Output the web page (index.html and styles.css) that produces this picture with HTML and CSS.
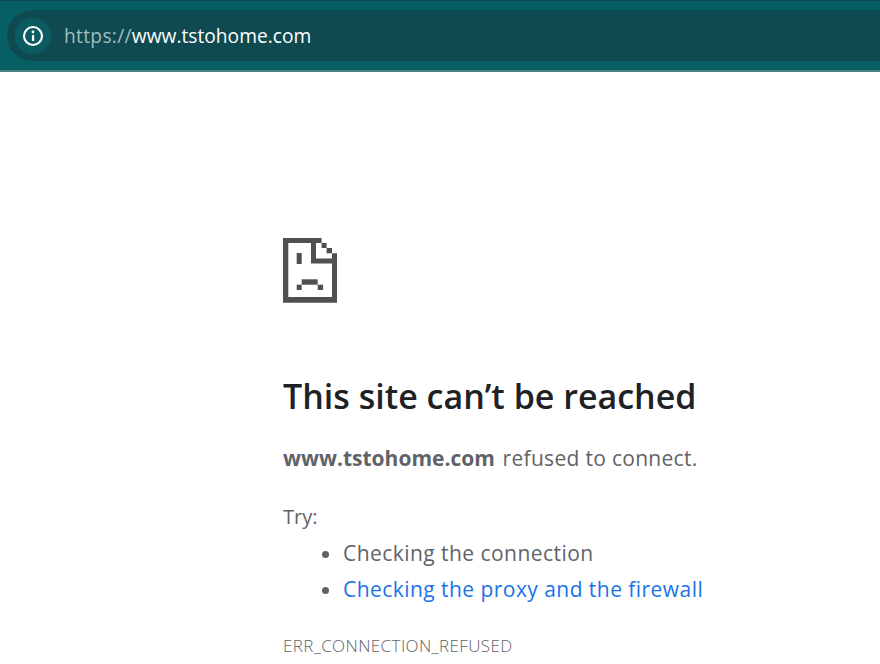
FILE: index.html
```html
<!DOCTYPE html>
<html lang="en">

<head>
    <meta charset="UTF-8">
    <title>www.tstohome.com</title>
    <link rel="stylesheet" href="styles.css">
</head>

<body>

    <div class="toolbar">
        <div class="address-bar">
            <div class="site-info">
                <svg width="22" height="22" viewBox="0 0 22 22">
                    <circle cx="11" cy="11" r="9" fill="none" stroke="#fff" stroke-width="2.1" />
                    <rect x="9.9" y="10" width="2.3" height="6" fill="#fff" />
                    <circle cx="11" cy="7" r="1.4" fill="#fff" />
                </svg>
            </div>
            <div class="url"><span class="scheme">https://</span>www.tstohome.com</div>
        </div>
    </div>

    <div class="content">
        <svg class="sad-page" width="54" height="65" viewBox="0 0 54 65">
            <path fill="#505050" d="M0 0H38.6V5H33V20.5H49V15.3H54V64.7H0ZM5.3 5V59H49V25.5H28V5Z" />
            <rect fill="#505050" x="38.6" y="5" width="5" height="5" />
            <rect fill="#505050" x="43.6" y="10" width="5.4" height="5.3" />
            <rect fill="#505050" x="13.7" y="15" width="5" height="11" />
            <rect fill="#505050" x="18.7" y="41.3" width="16" height="5.4" />
            <rect fill="#505050" x="13.7" y="46.7" width="5" height="5.3" />
            <rect fill="#505050" x="34.7" y="46.7" width="5.4" height="5.3" />
        </svg>

        <h1>This site can’t be reached</h1>
        <p class="summary"><strong>www.tstohome.com</strong> refused to connect.</p>

        <p class="try">Try:</p>
        <ul class="suggestions">
            <li>Checking the connection</li>
            <li><a href="#">Checking the proxy and the firewall</a></li>
        </ul>

        <div class="error-code">ERR_CONNECTION_REFUSED</div>
    </div>

</body>

</html>
```

FILE: styles.css
```css
body {
    margin: 0;
    height: 664px;
    overflow: hidden;
    background: #fff;
    font-family: "Open Sans", "Noto Sans", sans-serif;
    color: #5f6368;
}

.toolbar {
    height: 72px;
    box-sizing: border-box;
    padding: 10px 0 9px 7px;
    background: #055f63;
    border-top: 1px solid #0b4a50;
    border-bottom: 2px solid #4a8488;
    background-clip: padding-box;
}

.address-bar {
    height: 51px;
    margin-top: -1px;
    display: flex;
    align-items: center;
    padding-left: 8px;
    background: #0f4a51;
    border-radius: 26px 0 0 26px;
}

.site-info {
    width: 36px;
    height: 36px;
    display: flex;
    align-items: center;
    justify-content: center;
    border-radius: 50%;
    background: #0b5c62;
}

.url {
    margin-left: 13px;
    font-size: 19.2px;
    color: #fff;
}

.scheme {
    color: #a3bdc0;
    letter-spacing: 0.3px;
}

.content {
    padding: 166px 0 0 283px;
}

.sad-page {
    display: block;
}

h1 {
    margin: 70px 0 0;
    font-size: 34px;
    line-height: 46px;
    font-weight: 600;
    color: #202124;
}

.summary {
    margin: 21px 0 0;
    font-size: 21px;
    line-height: 36px;
    letter-spacing: 0.3px;
}

.summary strong {
    margin-right: 2px;
    letter-spacing: 0;
}

.try {
    margin: 23px 0 0;
    font-size: 20px;
    line-height: 36px;
}

.suggestions {
    margin: 0;
    padding-left: 60px;
    font-size: 21px;
    line-height: 36px;
    letter-spacing: 0.45px;
}

.suggestions a {
    color: #1a73e8;
    text-decoration: none;
}

.error-code {
    margin-top: 27px;
    font-size: 17px;
    font-weight: 300;
    line-height: 24px;
    letter-spacing: 0.4px;
}
```
